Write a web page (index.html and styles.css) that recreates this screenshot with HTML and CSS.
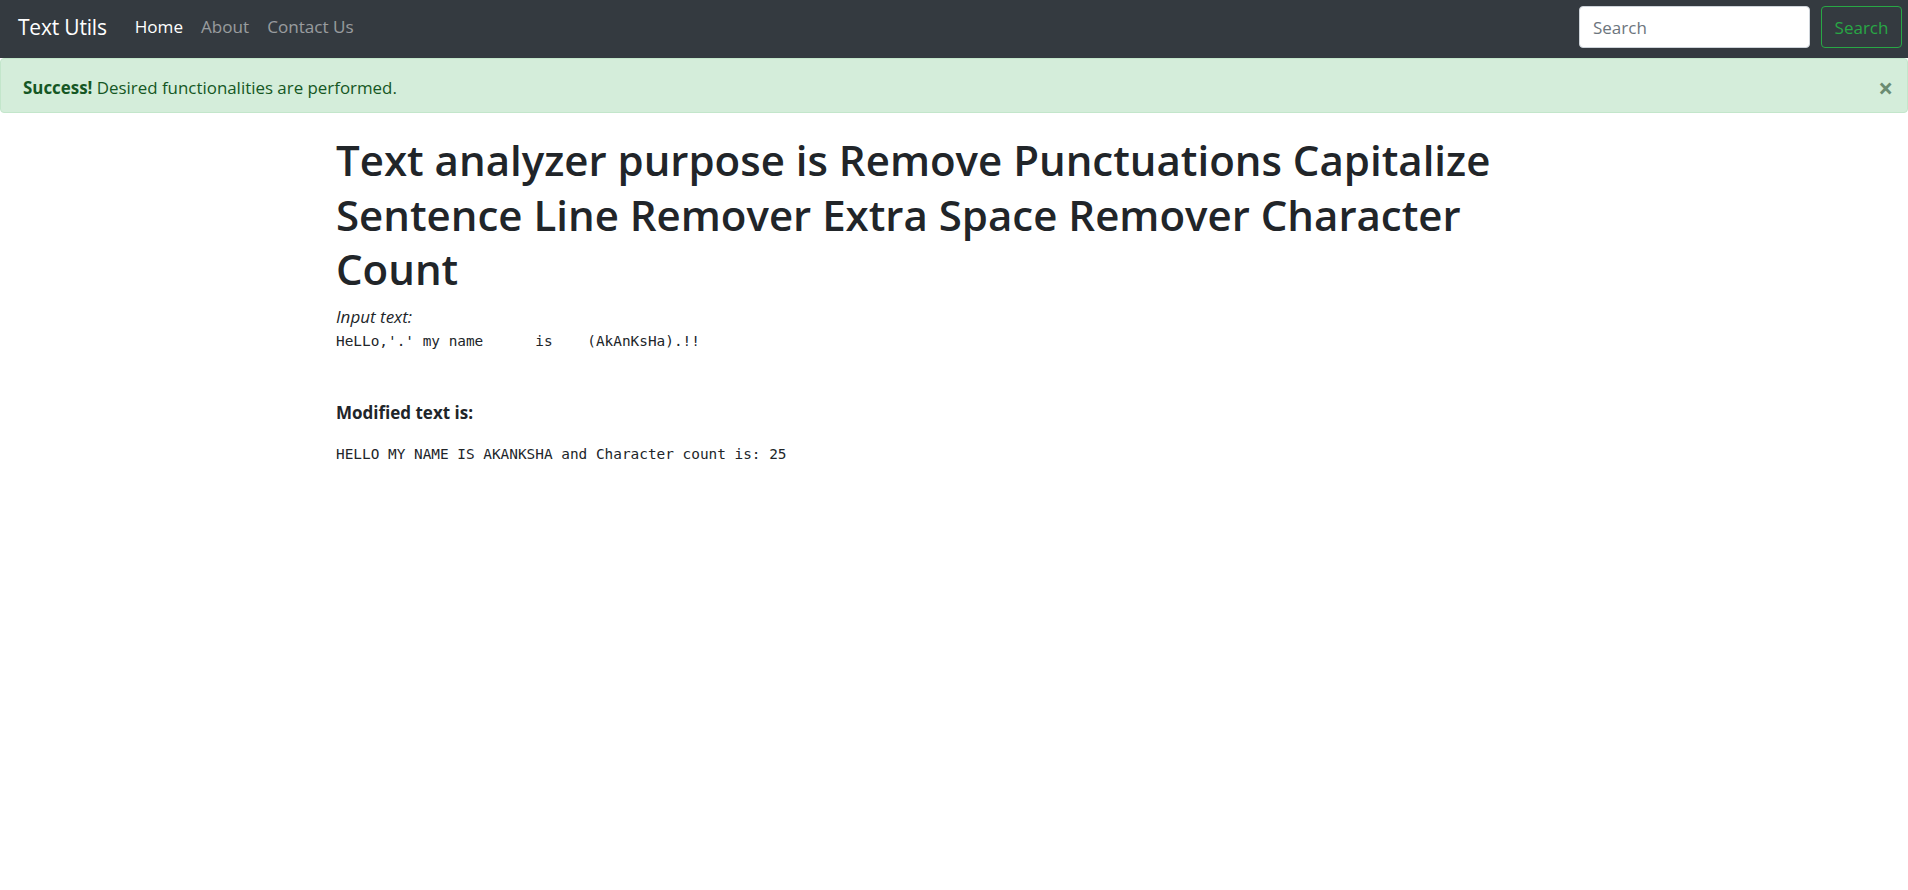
FILE: index.html
```html
<!DOCTYPE html>
<html lang="en">
<head>
<meta charset="utf-8">
<title>TextUtils - Home</title>
<link rel="stylesheet" href="styles.css">
</head>
<body>
<nav class="navbar">
  <a class="brand" href="#">Text Utils</a>
  <ul class="nav-links">
    <li><a class="nav-link active" href="#">Home</a></li>
    <li><a class="nav-link" href="#">About</a></li>
    <li><a class="nav-link" href="#">Contact Us</a></li>
  </ul>
  <form class="search-form">
    <input class="search-input" type="search" placeholder="Search">
    <button class="search-btn" type="button">Search</button>
  </form>
</nav>
<div class="alert">
  <span><strong>Success!</strong> Desired functionalities are performed.</span>
  <button class="close" type="button">&times;</button>
</div>
<main class="container">
  <h1 class="title">Text analyzer purpose is Remove Punctuations Capitalize Sentence Line Remover Extra Space Remover Character Count</h1>
  <p class="label">Input text:</p>
  <pre class="mono input-text">HeLLo,'.' my name      is    (AkAnKsHa).!!</pre>
  <h6 class="subhead">Modified text is:</h6>
  <pre class="mono output-text">HELLO MY NAME IS AKANKSHA and Character count is: 25</pre>
</main>
</body>
</html>
```

FILE: styles.css
```css
* { box-sizing: border-box; }
html, body { margin: 0; padding: 0; }
body {
  font-family: "Open Sans", "Noto Sans", sans-serif;
  font-size: 17px;
  line-height: 1.5;
  color: #212529;
  background: #fff;
}
a { text-decoration: none; }

.navbar {
  height: 58px;
  background: #343a40;
  display: flex;
  align-items: center;
  padding: 0 6px 4px 18px;
}
.brand {
  color: #fff;
  font-size: 21px;
  line-height: 30px;
  margin-right: 19px;
  letter-spacing: -0.2px;
}
.nav-links {
  list-style: none;
  display: flex;
  margin: 0;
  padding: 0;
  flex: 1;
}
.nav-link {
  display: block;
  padding: 8px 9px;
  color: rgba(255, 255, 255, 0.5);
  font-size: 17.1px;
}
.nav-link.active { color: #fff; }

.search-form {
  display: flex;
  gap: 11px;
}
.search-input {
  width: 231px;
  height: 42px;
  border: 1px solid #ced4da;
  border-radius: 4px;
  padding: 0 13px;
  font-family: inherit;
  font-size: 17px;
  color: #495057;
  background: #fff;
  outline: none;
}
.search-input::placeholder { color: #6c757d; }
.search-btn {
  width: 81px;
  height: 42px;
  border: 1px solid #28a745;
  border-radius: 4px;
  background: transparent;
  color: #28a745;
  font-family: inherit;
  font-size: 17px;
  padding: 0;
}

.alert {
  height: 55px;
  display: flex;
  align-items: center;
  justify-content: space-between;
  padding: 4px 10px 0 22px;
  background: #d4edda;
  border: 1px solid #c3e6cb;
  border-radius: 4px;
  color: #155724;
  font-size: 16.9px;
}
.alert strong { font-weight: 700; }
.close {
  background: none;
  border: 0;
  padding: 0 4px;
  font-family: inherit;
  font-size: 26px;
  font-weight: 700;
  line-height: 1;
  color: #6b8c72;
}

.container {
  width: 1236px;
  margin: 0 auto;
  padding: 20px 15px 0 0;
}
.title {
  margin: 0 0 7px;
  font-size: 42px;
  font-weight: 600;
  line-height: 54.5px;
  color: #212529;
  letter-spacing: 0;
}
.label {
  margin: 0;
  font-style: italic;
  font-size: 17px;
  line-height: 26px;
}
.mono {
  font-family: "DejaVu Sans Mono", "Liberation Mono", monospace;
  font-size: 14.4px;
  line-height: 23px;
  margin: 0;
  color: #212529;
}
.subhead {
  margin: 47px 0 17px;
  font-size: 17px;
  font-weight: 700;
  line-height: 26px;
}
```
